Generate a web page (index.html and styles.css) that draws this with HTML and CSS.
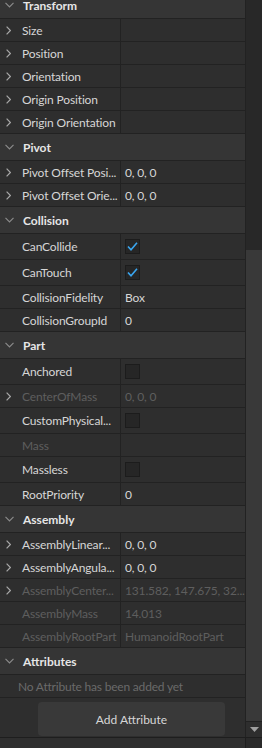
FILE: index.html
```html
<!DOCTYPE html>
<html>
<head>
<meta charset="utf-8">
<link rel="stylesheet" href="styles.css">
</head>
<body>
<div class="window">
  <div class="main">
    <div class="panel">
      <div class="content">
        <div class="head"><span class="htw"><svg width="9" height="6" viewBox="0 0 9 6"><polyline points="0.5,0.8 4.5,4.8 8.5,0.8" fill="none" stroke="#8a8a8a" stroke-width="1.2"/></svg></span>Transform</div>
        <div class="row"><span class="name"><span class="twist"><svg width="5" height="9" viewBox="0 0 5 9"><polyline points="0.6,0.6 4.4,4.5 0.6,8.4" fill="none" stroke="#a8a8a8" stroke-width="1.2"/></svg></span><span class="label">Size</span></span><span class="val"></span></div>
        <div class="row"><span class="name"><span class="twist"><svg width="5" height="9" viewBox="0 0 5 9"><polyline points="0.6,0.6 4.4,4.5 0.6,8.4" fill="none" stroke="#a8a8a8" stroke-width="1.2"/></svg></span><span class="label">Position</span></span><span class="val"></span></div>
        <div class="row"><span class="name"><span class="twist"><svg width="5" height="9" viewBox="0 0 5 9"><polyline points="0.6,0.6 4.4,4.5 0.6,8.4" fill="none" stroke="#a8a8a8" stroke-width="1.2"/></svg></span><span class="label">Orientation</span></span><span class="val"></span></div>
        <div class="row"><span class="name"><span class="twist"><svg width="5" height="9" viewBox="0 0 5 9"><polyline points="0.6,0.6 4.4,4.5 0.6,8.4" fill="none" stroke="#a8a8a8" stroke-width="1.2"/></svg></span><span class="label">Origin Position</span></span><span class="val"></span></div>
        <div class="row"><span class="name"><span class="twist"><svg width="5" height="9" viewBox="0 0 5 9"><polyline points="0.6,0.6 4.4,4.5 0.6,8.4" fill="none" stroke="#a8a8a8" stroke-width="1.2"/></svg></span><span class="label">Origin Orientation</span></span><span class="val"></span></div>

        <div class="head"><span class="htw"><svg width="9" height="6" viewBox="0 0 9 6"><polyline points="0.5,0.8 4.5,4.8 8.5,0.8" fill="none" stroke="#8a8a8a" stroke-width="1.2"/></svg></span>Pivot</div>
        <div class="row"><span class="name"><span class="twist"><svg width="5" height="9" viewBox="0 0 5 9"><polyline points="0.6,0.6 4.4,4.5 0.6,8.4" fill="none" stroke="#a8a8a8" stroke-width="1.2"/></svg></span><span class="label">Pivot Offset Posi...</span></span><span class="val">0, 0, 0</span></div>
        <div class="row"><span class="name"><span class="twist"><svg width="5" height="9" viewBox="0 0 5 9"><polyline points="0.6,0.6 4.4,4.5 0.6,8.4" fill="none" stroke="#a8a8a8" stroke-width="1.2"/></svg></span><span class="label">Pivot Offset Orie...</span></span><span class="val">0, 0, 0</span></div>

        <div class="head"><span class="htw"><svg width="9" height="6" viewBox="0 0 9 6"><polyline points="0.5,0.8 4.5,4.8 8.5,0.8" fill="none" stroke="#8a8a8a" stroke-width="1.2"/></svg></span>Collision</div>
        <div class="row tall"><span class="name"><span class="twist"></span><span class="label">CanCollide</span></span><span class="val"><span class="check"><svg width="13" height="13" viewBox="0 0 13 13"><polyline points="2,6.5 5,9.8 11,2.8" fill="none" stroke="#3aa6f0" stroke-width="1.6"/></svg></span></span></div>
        <div class="row tall"><span class="name"><span class="twist"></span><span class="label">CanTouch</span></span><span class="val"><span class="check"><svg width="13" height="13" viewBox="0 0 13 13"><polyline points="2,6.5 5,9.8 11,2.8" fill="none" stroke="#3aa6f0" stroke-width="1.6"/></svg></span></span></div>
        <div class="row"><span class="name"><span class="twist"></span><span class="label">CollisionFidelity</span></span><span class="val">Box</span></div>
        <div class="row"><span class="name"><span class="twist"></span><span class="label">CollisionGroupId</span></span><span class="val">0</span></div>

        <div class="head"><span class="htw"><svg width="9" height="6" viewBox="0 0 9 6"><polyline points="0.5,0.8 4.5,4.8 8.5,0.8" fill="none" stroke="#8a8a8a" stroke-width="1.2"/></svg></span>Part</div>
        <div class="row tall"><span class="name"><span class="twist"></span><span class="label">Anchored</span></span><span class="val"><span class="check"></span></span></div>
        <div class="row dis"><span class="name"><span class="twist"><svg width="5" height="9" viewBox="0 0 5 9"><polyline points="0.6,0.6 4.4,4.5 0.6,8.4" fill="none" stroke="#a8a8a8" stroke-width="1.2"/></svg></span><span class="label">CenterOfMass</span></span><span class="val">0, 0, 0</span></div>
        <div class="row tall"><span class="name"><span class="twist"></span><span class="label">CustomPhysical...</span></span><span class="val"><span class="check"></span></span></div>
        <div class="row dis"><span class="name"><span class="twist"></span><span class="label">Mass</span></span><span class="val"></span></div>
        <div class="row tall"><span class="name"><span class="twist"></span><span class="label">Massless</span></span><span class="val"><span class="check"></span></span></div>
        <div class="row"><span class="name"><span class="twist"></span><span class="label">RootPriority</span></span><span class="val">0</span></div>

        <div class="head"><span class="htw"><svg width="9" height="6" viewBox="0 0 9 6"><polyline points="0.5,0.8 4.5,4.8 8.5,0.8" fill="none" stroke="#8a8a8a" stroke-width="1.2"/></svg></span>Assembly</div>
        <div class="row"><span class="name"><span class="twist"><svg width="5" height="9" viewBox="0 0 5 9"><polyline points="0.6,0.6 4.4,4.5 0.6,8.4" fill="none" stroke="#a8a8a8" stroke-width="1.2"/></svg></span><span class="label">AssemblyLinear...</span></span><span class="val">0, 0, 0</span></div>
        <div class="row"><span class="name"><span class="twist"><svg width="5" height="9" viewBox="0 0 5 9"><polyline points="0.6,0.6 4.4,4.5 0.6,8.4" fill="none" stroke="#a8a8a8" stroke-width="1.2"/></svg></span><span class="label">AssemblyAngula...</span></span><span class="val">0, 0, 0</span></div>
        <div class="row dis"><span class="name"><span class="twist"><svg width="5" height="9" viewBox="0 0 5 9"><polyline points="0.6,0.6 4.4,4.5 0.6,8.4" fill="none" stroke="#a8a8a8" stroke-width="1.2"/></svg></span><span class="label">AssemblyCenter...</span></span><span class="val">131.582, 147.675, 32...</span></div>
        <div class="row dis"><span class="name"><span class="twist"></span><span class="label">AssemblyMass</span></span><span class="val">14.013</span></div>
        <div class="row dis"><span class="name"><span class="twist"></span><span class="label">AssemblyRootPart</span></span><span class="val">HumanoidRootPart</span></div>

        <div class="head"><span class="htw"><svg width="9" height="6" viewBox="0 0 9 6"><polyline points="0.5,0.8 4.5,4.8 8.5,0.8" fill="none" stroke="#8a8a8a" stroke-width="1.2"/></svg></span>Attributes</div>
        <div class="row empty">No Attribute has been added yet</div>
        <div class="btnrow"><div class="addbtn">Add Attribute</div></div>
      </div>
    </div>
    <div class="scroll">
      <div class="track"></div>
      <div class="thumb"></div>
      <div class="arrow"><svg width="9" height="6" viewBox="0 0 9 6"><polygon points="0,0 9,0 4.5,5" fill="#a0a0a0"/></svg></div>
    </div>
  </div>
  <div class="bottom"><div class="bottom-left"></div></div>
</div>
</body>
</html>
```
FILE: styles.css
```css
html, body {
  margin: 0;
  padding: 0;
  background: #2e2e2e;
}

body {
  font-family: Lato, "Noto Sans", sans-serif;
  font-size: 12px;
  color: #d6d6d6;
}

.window {
  width: 262px;
  height: 748px;
  display: flex;
  flex-direction: column;
  overflow: hidden;
}

.main {
  display: flex;
  height: 737px;
  flex: none;
}

.panel {
  width: 245px;
  border-right: 1px solid #222222;
  overflow: hidden;
  background: #2e2e2e;
}

.content {
  margin-top: -8px;
}

.head {
  height: 26px;
  border-bottom: 1px solid #222222;
  background: #353535;
  display: flex;
  align-items: center;
  font-weight: bold;
  color: #e6e6e6;
}

.htw {
  width: 23px;
  flex: none;
  box-sizing: border-box;
  padding-left: 5px;
  display: flex;
  align-items: center;
}

.row {
  display: flex;
  height: 22px;
  border-bottom: 1px solid #222222;
  background: #2e2e2e;
  letter-spacing: -0.15px;
}

.row.tall {
  height: 25px;
}

.name {
  width: 121px;
  flex: none;
  box-sizing: border-box;
  border-right: 1px solid #222222;
  display: flex;
  align-items: center;
}

.twist {
  width: 22px;
  flex: none;
  box-sizing: border-box;
  padding-left: 6px;
  display: flex;
  align-items: center;
}

.label {
  white-space: nowrap;
}

.val {
  flex: 1;
  min-width: 0;
  display: flex;
  align-items: center;
  padding-left: 4px;
  white-space: nowrap;
}

.dis .label,
.dis .val {
  color: #5e5e5e;
}

.check {
  width: 13px;
  height: 13px;
  border: 1px solid #1c1c1c;
  background: #262626;
  display: flex;
  align-items: center;
  justify-content: center;
}

.empty {
  align-items: center;
  padding-left: 18px;
  color: #6a6a6a;
  letter-spacing: -0.2px;
}

.btnrow {
  height: 39px;
  box-sizing: border-box;
  padding-top: 4px;
  padding-left: 38px;
}

.addbtn {
  width: 187px;
  height: 34px;
  border-radius: 4px;
  background: #393939;
  color: #d6d6d6;
  display: flex;
  align-items: center;
  justify-content: center;
}

.scroll {
  width: 16px;
  display: flex;
  flex-direction: column;
  background: #282828;
}

.track {
  height: 250px;
  flex: none;
}

.thumb {
  flex: 1;
  background: #393939;
}

.arrow {
  height: 15px;
  flex: none;
  border-top: 1px solid #222222;
  background: #2e2e2e;
  display: flex;
  align-items: center;
  justify-content: center;
}

.bottom {
  flex: 1;
  border-top: 1px solid #1e1e1e;
  background: #2a2a2a;
  display: flex;
}

.bottom-left {
  width: 245px;
  background: #2f2f2f;
  border-right: 1px solid #1e1e1e;
}
```
